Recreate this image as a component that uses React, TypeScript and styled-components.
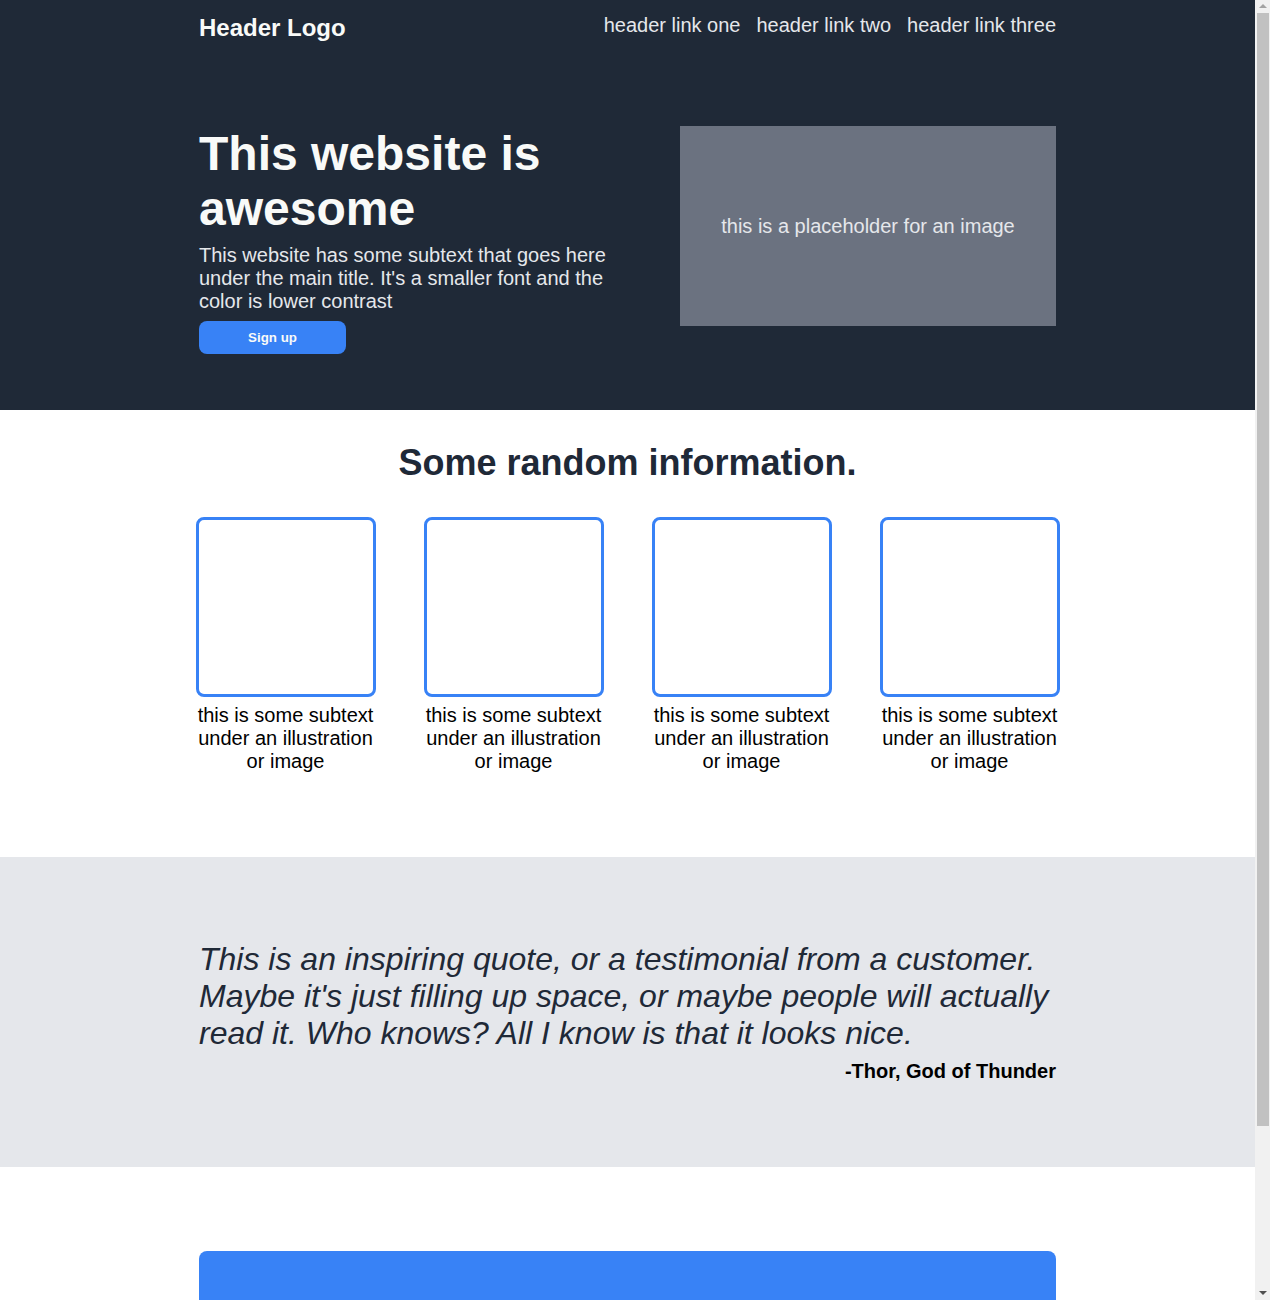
import React from "react";
import styled, { createGlobalStyle } from "styled-components";

const GlobalStyle = createGlobalStyle`
  html, body {
    margin: 0;
    padding: 0;
  }
  body {
    font-family: "Liberation Sans", Arial, sans-serif;
    color: #1f2937;
    background: #ffffff;
  }
  * { box-sizing: border-box; }
`;

/* Page area leaves room for the browser-style scrollbar on the right */
const Page = styled.div`
  margin-right: 15px;
`;

const ScrollTrack = styled.div`
  position: fixed;
  top: 0;
  right: 0;
  width: 15px;
  height: 100vh;
  background: #f1f1f1;
  z-index: 10;
`;

const ScrollThumb = styled.div`
  position: absolute;
  top: 13px;
  left: 2px;
  right: 1px;
  height: 1113px;
  background: #c1c1c1;
`;

const ScrollArrow = styled.div<{ $dir: "up" | "down" }>`
  position: absolute;
  left: 4px;
  width: 0;
  height: 0;
  border-left: 4px solid transparent;
  border-right: 4px solid transparent;
  ${(p) =>
    p.$dir === "up"
      ? `top: 4px; border-bottom: 4px solid #a3a3a3;`
      : `bottom: 5px; border-top: 4px solid #505050;`}
`;

const Container = styled.div`
  width: 857px;
  margin: 0 auto;
`;

const Hero = styled.section`
  background: #1f2937;
  padding: 14px 0 56px;
`;

const Nav = styled.nav`
  display: flex;
  justify-content: space-between;
  align-items: flex-start;
`;

const Logo = styled.div`
  font-size: 24px;
  font-weight: 700;
  color: #f9faf8;
`;

const Links = styled.ul`
  display: flex;
  gap: 16px;
  list-style: none;
  margin: 0;
  padding: 0;
`;

const NavLink = styled.a`
  font-size: 20px;
  color: #e5e7eb;
  text-decoration: none;
`;

const HeroRow = styled.div`
  display: flex;
  justify-content: space-between;
  align-items: flex-start;
  margin-top: 84px;
`;

const HeroText = styled.div`
  width: 430px;
  display: flex;
  flex-direction: column;
  align-items: flex-start;
`;

const Title = styled.h1`
  margin: 0;
  font-size: 48px;
  font-weight: 700;
  line-height: 1.15;
  color: #f9faf8;
`;

const Subtext = styled.p`
  margin: 8px 0 0;
  font-size: 20px;
  line-height: 1.15;
  color: #e5e7eb;
`;

const Button = styled.button`
  margin-top: 8px;
  width: 147px;
  height: 33px;
  border: none;
  border-radius: 8px;
  background: #3882f6;
  color: #f9faf8;
  font-family: "Liberation Sans", Arial, sans-serif;
  font-size: 13.33px;
  font-weight: 700;
  cursor: pointer;
`;

const Placeholder = styled.div`
  width: 376px;
  height: 200px;
  background: #6b7280;
  display: flex;
  align-items: center;
  justify-content: center;
  font-size: 20px;
  color: #e5e7eb;
`;

const Info = styled.section`
  padding: 31.5px 0 84.5px;
`;

const InfoHeading = styled.h2`
  margin: 0;
  text-align: center;
  font-size: 36px;
  font-weight: 700;
  line-height: 1.15;
  color: #1f2937;
`;

const Cards = styled.div`
  display: flex;
  justify-content: center;
  gap: 48px;
  margin-top: 33.5px;
`;

const Card = styled.div`
  width: 180px;
  display: flex;
  flex-direction: column;
  align-items: center;
`;

const Illustration = styled.div`
  width: 180px;
  height: 180px;
  border: 3px solid #3882f6;
  border-radius: 8px;
`;

const Caption = styled.p`
  margin: 7px 0 0;
  text-align: center;
  font-size: 20px;
  line-height: 1.15;
  color: #000000;
`;

const QuoteSection = styled.section`
  background: #e5e7eb;
  padding: 84px 0 84.5px;
`;

const Quote = styled.blockquote`
  margin: 0;
  font-size: 32px;
  font-style: italic;
  font-weight: 400;
  line-height: 1.15;
  color: #1f2937;
`;

const Attribution = styled.p`
  margin: 8px 0 0;
  text-align: right;
  font-size: 20px;
  font-weight: 700;
  line-height: 1.15;
  color: #000000;
`;

const CtaSection = styled.section`
  padding: 84px 0 40px;
`;

const CtaBox = styled.div`
  background: #3882f6;
  border-radius: 8px;
  height: 150px;
`;

const Footer = styled.footer`
  background: #1f2937;
  height: 46px;
`;

const cards = [1, 2, 3, 4];

export default function App() {
  return (
    <>
      <GlobalStyle />
      <Page>
        <Hero>
          <Container>
            <Nav>
              <Logo>Header Logo</Logo>
              <Links>
                <li><NavLink href="#">header link one</NavLink></li>
                <li><NavLink href="#">header link two</NavLink></li>
                <li><NavLink href="#">header link three</NavLink></li>
              </Links>
            </Nav>
            <HeroRow>
              <HeroText>
                <Title>This website is awesome</Title>
                <Subtext>
                  This website has some subtext that goes here under the main title. It's a smaller font and the color is lower contrast
                </Subtext>
                <Button>Sign up</Button>
              </HeroText>
              <Placeholder>this is a placeholder for an image</Placeholder>
            </HeroRow>
          </Container>
        </Hero>
        <Info>
          <InfoHeading>Some random information.</InfoHeading>
          <Cards>
            {cards.map((c) => (
              <Card key={c}>
                <Illustration />
                <Caption>this is some subtext under an illustration or image</Caption>
              </Card>
            ))}
          </Cards>
        </Info>
        <QuoteSection>
          <Container>
            <Quote>
              This is an inspiring quote, or a testimonial from a customer. Maybe it's just filling up space, or maybe people will actually read it. Who knows? All I know is that it looks nice.
            </Quote>
            <Attribution>-Thor, God of Thunder</Attribution>
          </Container>
        </QuoteSection>
        <CtaSection>
          <Container>
            <CtaBox />
          </Container>
        </CtaSection>
        <Footer />
      </Page>
      <ScrollTrack aria-hidden="true">
        <ScrollArrow $dir="up" />
        <ScrollThumb />
        <ScrollArrow $dir="down" />
      </ScrollTrack>
    </>
  );
}
